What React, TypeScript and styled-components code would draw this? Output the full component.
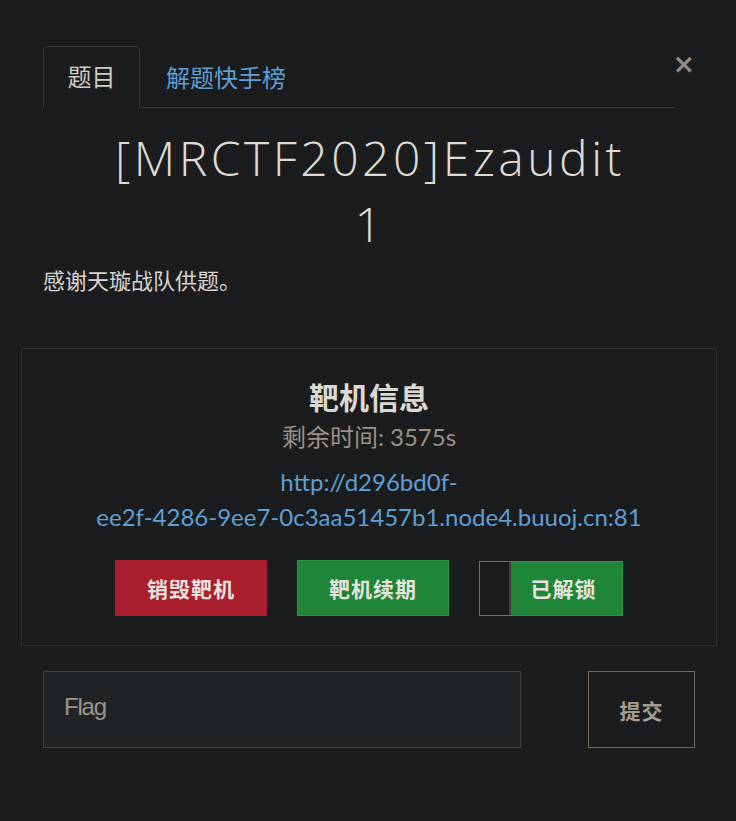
import React from "react";
import styled, { createGlobalStyle } from "styled-components";

const Global = createGlobalStyle`
  html, body { margin: 0; padding: 0; background: #1b1c1e; }
  body { font-family: Lato, "Noto Sans CJK SC", sans-serif; color: #d8d4cf; }
  * { box-sizing: border-box; }
`;

const Modal = styled.div`
  width: 736px;
  min-height: 821px;
  padding: 46px 19px 0 21px;
  background: #1b1c1e;
`;

const Section = styled.div`
  margin: 0 22px;
`;

const Header = styled.div`
  display: flex;
  align-items: flex-start;
`;

const Tabs = styled.div`
  flex: 1;
  display: flex;
  border-bottom: 1px solid #37393b;
  height: 62px;
`;

const Tab = styled.div<{ $active?: boolean }>`
  height: 62px;
  display: flex;
  align-items: center;
  justify-content: center;
  font-family: "Noto Sans CJK SC", sans-serif;
  font-size: 24px;
  line-height: 1;
  color: ${(p) => (p.$active ? "#d0ccc6" : "#5e9fd4")};
  border: 1px solid ${(p) => (p.$active ? "#37393b" : "transparent")};
  border-bottom: ${(p) => (p.$active ? "1px solid #1b1c1e" : "none")};
  border-radius: 5px 5px 0 0;
  margin-bottom: -1px;
  padding-bottom: 2px;
  width: ${(p) => (p.$active ? "97px" : "auto")};
  padding-left: ${(p) => (p.$active ? "0" : "25px")};
`;

const Close = styled.div`
  width: 20px;
  display: flex;
  justify-content: flex-end;
  font-family: "DejaVu Sans", sans-serif;
  font-weight: bold;
  font-size: 27px;
  line-height: 36px;
  color: #8c8c8c;
`;

const Title = styled.h1`
  margin: 17px 0 0;
  padding-left: 2px;
  text-align: center;
  font-family: "Open Sans", sans-serif;
  font-weight: 300;
  font-size: 48px;
  line-height: 66px;
  letter-spacing: 3.5px;
  color: #dedbd5;
`;

const Desc = styled.p`
  margin: 8px 0 0;
  font-family: Lato, "Noto Sans CJK SC", sans-serif;
  font-size: 22px;
  line-height: 32px;
  color: #d8d4cf;
`;

const Card = styled.div`
  margin-top: 51px;
  border: 1px solid #2c2e30;
  padding: 27px 40px 29px;
  display: flex;
  flex-direction: column;
  align-items: center;
  text-align: center;
`;

const CardTitle = styled.div`
  font-family: Lato, "Noto Sans CJK SC", sans-serif;
  font-weight: bold;
  font-size: 30px;
  line-height: 42px;
  color: #dcd8d2;
`;

const Remain = styled.div`
  margin-top: 2px;
  font-family: Lato, "Noto Sans CJK SC", sans-serif;
  font-size: 24px;
  line-height: 34px;
  color: #9a9287;
`;

const Link = styled.a`
  margin-top: 10px;
  display: block;
  font-family: Lato, "Noto Sans CJK SC", sans-serif;
  font-size: 24px;
  line-height: 35px;
  color: #5e9fd4;
  text-decoration: none;
`;

const NoWrap = styled.span`
  white-space: nowrap;
`;

const Actions = styled.div`
  margin-top: 26px;
  display: flex;
  gap: 30px;
  align-items: center;
`;

const Btn = styled.button<{ $tone: "red" | "green" }>`
  width: 152px;
  height: 56px;
  border: 1px solid ${(p) => (p.$tone === "red" ? "#a91f2e" : "#2c9a45")};
  background: ${(p) => (p.$tone === "red" ? "#a91f2e" : "#1f8538")};
  color: #e6e3de;
  font-family: "Noto Sans CJK SC", sans-serif;
  font-weight: bold;
  font-size: 21px;
  letter-spacing: 1px;
  padding: 0;
  cursor: pointer;
`;

const Toggle = styled.div`
  width: 144px;
  height: 55px;
  border: 1px solid #2c9a45;
  display: flex;
  background: #1f8538;
`;

const Knob = styled.span`
  width: 31px;
  background: #1b1c1e;
  border-right: 2px solid #3e3f41;
`;

const ToggleLabel = styled.span`
  flex: 1;
  display: flex;
  align-items: center;
  justify-content: center;
  color: #e6e3de;
  font-family: "Noto Sans CJK SC", sans-serif;
  font-weight: bold;
  font-size: 21px;
  letter-spacing: 1px;
  padding-right: 6px;
`;

const Form = styled.div`
  margin-top: 25px;
  display: flex;
  justify-content: space-between;
`;

const Input = styled.input`
  width: 478px;
  height: 77px;
  background: #202326;
  border: 1px solid #3f4143;
  padding: 0 20px 6px;
  font-family: "Liberation Sans Narrow", "Liberation Sans", Arial, sans-serif;
  font-size: 24px;
  letter-spacing: -1.2px;
  color: #d8d4cf;
  outline: none;
  &::placeholder { color: #9d9588; }
`;

const Submit = styled.button`
  width: 107px;
  height: 77px;
  background: transparent;
  border: 1px solid #6f685e;
  color: #a59d90;
  font-family: "Noto Sans CJK SC", sans-serif;
  font-weight: bold;
  font-size: 21px;
  letter-spacing: 1px;
  padding: 0;
  cursor: pointer;
`;

export default function App() {
  return (
    <>
      <Global />
      <Modal>
        <Section>
          <Header>
            <Tabs>
              <Tab $active>题目</Tab>
              <Tab>解题快手榜</Tab>
            </Tabs>
            <Close>×</Close>
          </Header>
          <Title>
            [MRCTF2020]Ezaudit
            <br />1
          </Title>
          <Desc>感谢天璇战队供题。</Desc>
        </Section>
        <Card>
          <CardTitle>靶机信息</CardTitle>
          <Remain>剩余时间: 3575s</Remain>
          <Link href="#">
            http://d296bd0f-<wbr />
            <NoWrap>ee2f-4286-9ee7-0c3aa51457b1.node4.buuoj.cn:81</NoWrap>
          </Link>
          <Actions>
            <Btn $tone="red">销毁靶机</Btn>
            <Btn $tone="green">靶机续期</Btn>
            <Toggle>
              <Knob />
              <ToggleLabel>已解锁</ToggleLabel>
            </Toggle>
          </Actions>
        </Card>
        <Section>
          <Form>
            <Input placeholder="Flag" />
            <Submit>提交</Submit>
          </Form>
        </Section>
      </Modal>
    </>
  );
}
